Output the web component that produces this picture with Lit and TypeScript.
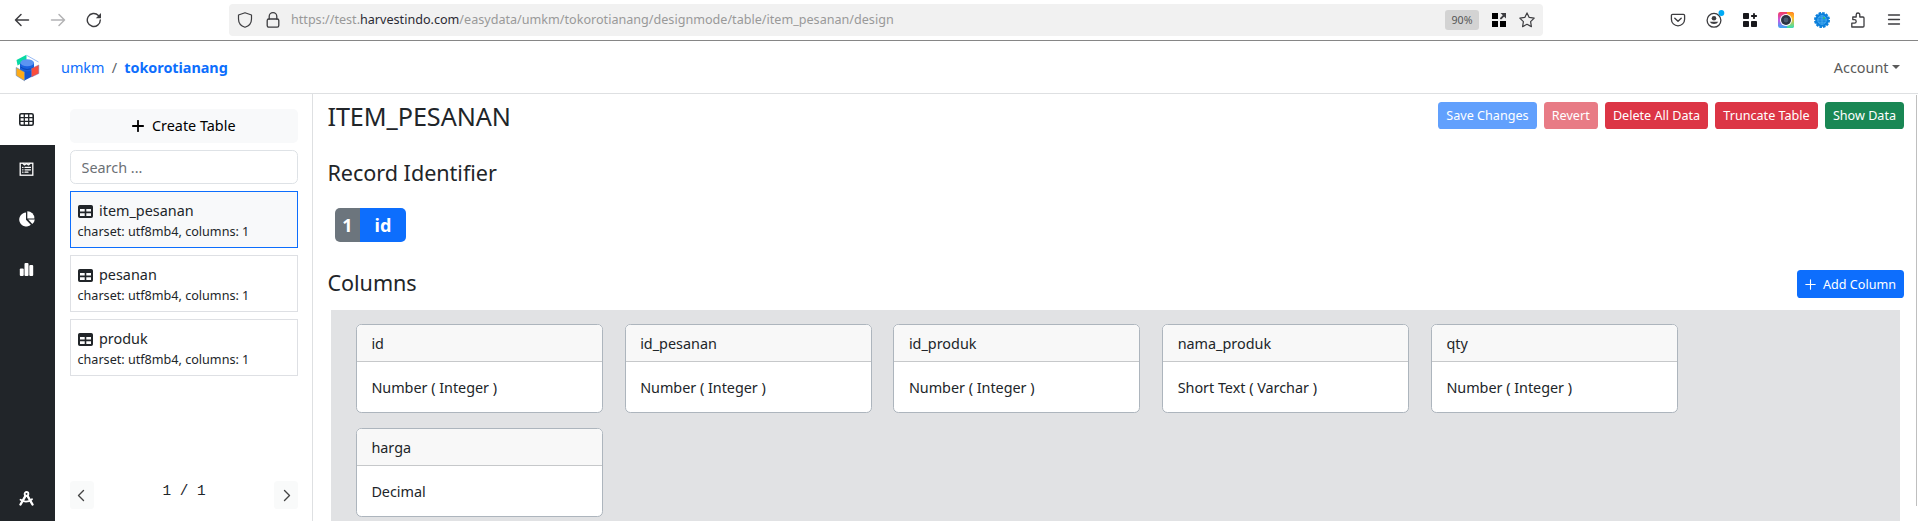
import { LitElement, html, css, svg } from "lit";
import { customElement, state } from "lit/decorators.js";

interface TableInfo { name: string; meta: string; }
interface ColumnInfo { name: string; type: string; }

const icon = (body: unknown, w = 16, h = w, box = "0 0 16 16") =>
  html`<svg class="icon" width=${w} height=${h} viewBox=${box} aria-hidden="true">${body}</svg>`;

const line = (d: string, width = 1.3, color = "currentColor") =>
  svg`<path d=${d} fill="none" stroke=${color} stroke-width=${width} stroke-linecap="round" stroke-linejoin="round"/>`;

const fill = (d: string, color = "currentColor") => svg`<path d=${d} fill=${color} fill-rule="evenodd"/>`;

@customElement("browser-bar")
export class BrowserBar extends LitElement {
  static styles = css`
    :host { display: flex; align-items: center; height: 40px; flex: none; background: #fff; border-bottom: 1px solid #868686; color: #3d3d40; }
    .icon { display: block; flex: none; }
    .nav { display: flex; gap: 20px; width: 229px; padding-left: 14px; box-sizing: border-box; }
    .faded { color: #b3b3b5; }
    .field { display: flex; align-items: center; width: 1314px; height: 32px; background: #f1f1f1; border-radius: 4px; box-sizing: border-box; padding: 0 8px; }
    .lock { margin-left: 12px; }
    .url { margin-left: 10px; flex: 1; font-size: 12.6px; line-height: 20px; color: #999; white-space: nowrap; }
    .host { color: #2b2a33; }
    .zoom { width: 34px; height: 20px; border-radius: 3px; background: #d3d3d3; color: #555; font-size: 10.6px; line-height: 20px; text-align: center; margin-right: 12px; }
    .star { margin-left: 12px; }
    .tools { display: grid; grid-template-columns: repeat(7, 36px); align-items: center; justify-items: center; margin-left: 117px; height: 40px; }
  `;
  render() {
    return html`
      <div class="nav">
        ${icon(line("M14.5 8H1.5M7 2.5L1.5 8L7 13.5", 1.5))}
        <span class="faded">${icon(line("M1.5 8H14.5M9 2.5L14.5 8L9 13.5", 1.5))}</span>
        ${icon(svg`${line("M14.3 8A6.5 6.5 0 1 1 12.4 3.4L13.6 4.6", 1.4)}${fill("M15 1V6.2H9.8Z")}`)}
      </div>
      <div class="field">
        ${icon(line("M8 .8L14.5 3V7C14.5 11 12 14 8 15.3C4 14 1.5 11 1.5 7V3Z", 1.2))}
        <span class="lock">${icon(svg`${line("M4.2 7V4.5a3.8 3.8 0 0 1 7.6 0V7", 1.3)}<rect x="2.2" y="7" width="11.6" height="8.2" rx="1.6" fill="none" stroke="currentColor" stroke-width="1.3"/>`)}</span>
        <span class="url">https://test.<span class="host">harvestindo.com</span>/easydata/umkm/tokorotianang/designmode/table/item_pesanan/design</span>
        <span class="zoom">90%</span>
        ${icon(svg`${fill("M1 1h6v6H1ZM1 9h6v6H1ZM9 9h6v6H9Z", "#000")}${line("M10 6.4L13.5 2.9", 2)}${fill("M9.5 1H15V6.5Z")}`)}
        <span class="star">${icon(line("M8 .9L10.2 5.4L15.2 6.1L11.6 9.6L12.4 14.6L8 12.3L3.6 14.6L4.4 9.6L.8 6.1L5.8 5.4Z", 1.2))}</span>
      </div>
      <div class="tools">
        ${icon(svg`${line("M2.6 2.4h10.8a1.2 1.2 0 0 1 1.2 1.2v3.6a6.6 6.6 0 0 1-13.2 0V3.6a1.2 1.2 0 0 1 1.2-1.2Z", 1.3)}${line("M4.8 6.3L8 9.3L11.2 6.3", 1.4)}`)}
        ${icon(svg`<circle cx="10" cy="10.300" r="6.9" fill="none" stroke="currentColor" stroke-width="1.3"/><circle cx="10" cy="8.2" r="2.3" fill="currentColor"/>${fill("M5.7 11.700h8.600a4.8 4 0 0 1-8.600 0Z")}<circle cx="17.400" cy="3" r="2.9" fill="#00aaf5"/>`, 21, 20, "0 0 21 20")}
        ${icon(svg`<rect x="1" y="1" width="6" height="6" rx=".8" fill="#18181c"/><rect x="1" y="9" width="6" height="6" rx=".8" fill="#18181c"/><rect x="9" y="9" width="6" height="6" rx=".8" fill="#18181c"/>${line("M12 1.8V6.2M9.8 4H14.2", 1.8, "#18181c")}`)}
        ${icon(svg`<defs>
            <linearGradient id="g" x1="0" y1="0" x2="0" y2="1"><stop offset="0" stop-color="#f53a5c"/><stop offset=".5" stop-color="#c65be6"/><stop offset="1" stop-color="#35a9f5"/></linearGradient>
            <linearGradient id="h" x1="0" y1="0" x2="0" y2="1"><stop offset="0" stop-color="#ff8a1c"/><stop offset=".4" stop-color="#ffc02e"/><stop offset="1" stop-color="#35e0b0"/></linearGradient>
          </defs><rect width="16" height="16" rx="2.500" fill="url(#g)"/><path d="M9 0H13.500A2.500 2.500 0 0 1 16 2.500V13.500A2.500 2.500 0 0 1 13.500 16H9Z" fill="url(#h)"/><circle cx="8" cy="8" r="6" fill="#fff"/><circle cx="8" cy="8" r="5" fill="#2c3443"/><circle cx="8" cy="8" r="2.4" fill="#4c5a70"/>`)}
        ${icon(svg`<circle cx="8" cy="8" r="6.8" fill="#0b7fdb"/><circle cx="8" cy="8" r="6.900" fill="none" stroke="#0b7fdb" stroke-width="2.2" stroke-dasharray="2.500 1.110"/><circle cx="8" cy="8" r="4.2" fill="none" stroke="#55b4f5" stroke-width=".8"/>${line("M3.8 8H12.2M8 3.8V12.2M5 5.8H11M5 10.2H11", 0.7, "#55b4f5")}<circle cx="10" cy="6" r=".9" fill="#33cc55"/>`)}
        ${icon(line("M1.800 15H13a1 1 0 0 0 1-1V6a1 1 0 0 0-1-1H9.800V2.800a1.800 1.800 0 0 0-3.600 0V5H2.800V7.600H4.400a1.800 1.800 0 0 1 0 3.600H1.800Z", 1.3))}
        ${icon(line("M2.500 3H13.500M2.500 7.500H13.500M2.500 12H13.500", 1.3))}
      </div>`;
  }
}

@customElement("app-header")
export class AppHeader extends LitElement {
  static styles = css`
    :host { display: flex; flex: none; align-items: center; justify-content: space-between; height: 52px; border-bottom: 1px solid #dee0e2; padding: 0 18px 0 15px; font-size: 14.4px; line-height: 22px; }
    .brand { display: flex; align-items: center; padding-top: 2px; }
    .icon { display: block; margin-right: 21px; }
    .link { color: #0d6efd; }
    .sep { color: #5e6368; margin: 0 7.200px; }
    .current { font-weight: 700; color: #0d6efd; letter-spacing: -.03px; }
    .account { display: flex; align-items: center; color: #5a5a5a; padding-top: 2px; }
    .caret { border: 4.3px solid transparent; border-top-color: currentColor; border-bottom: 0; margin-left: 3.500px; margin-top: -2px; }
  `;
  render() {
    return html`
      <div class="brand">
        ${icon(svg`
          <path d="M5 9.500V21L9.500 26.500L19 21.500V9.500Z" fill="#1456cf"/>
          <path d="M1.500 6L11.500 .8V6L7 9L2.500 11.500Z" fill="#08d9a4"/>
          <path d="M12 1.500L23.500 8" fill="none" stroke="#7fa9f3" stroke-width=".8"/>
          <path d="M5.500 8.500V15Q12 20 19 15V8.500Z" fill="#1a62e0"/>
          <path d="M5.500 13Q12 18 19 13" fill="none" stroke="#0c45b4"/>
          <ellipse cx="12.200" cy="8.700" rx="6.800" ry="3.500" fill="#5b94f2"/>
          <path d="M1.200 13.500L9.500 18V26.800L1.200 21.500Z" fill="#fcab1a" stroke="#5b86c9" stroke-width=".6"/>
          <path d="M16.500 14.500L23.800 11V19.500L16.500 23Z" fill="#fb4d3d" stroke="#7d76b8" stroke-width=".5"/>`, 25, 28, "0 0 25 28")}
        <span class="link">umkm</span><span class="sep">/</span><span class="current">tokorotianang</span>
      </div>
      <div class="account">Account<span class="caret"></span></div>`;
  }
}

@customElement("side-rail")
export class SideRail extends LitElement {
  static styles = css`
    :host { display: flex; flex-direction: column; width: 55px; flex: none; background: #212529; color: #fff; }
    .item { height: 50px; box-sizing: border-box; display: flex; align-items: center; justify-content: center; padding: 0 2px 2px 0; }
    .active { background: #fff; color: #212529; height: 51px; padding-bottom: 0; }
    .last { margin-top: auto; height: 45px; padding-bottom: 1px; }
    .icon { display: block; }
  `;
  render() {
    return html`
      <div class="item active">${icon(svg`<rect x=".8" y="1.800" width="13.400" height="11.400" rx="1.500" fill="none" stroke="currentColor" stroke-width="1.600"/>${line("M1 5.600H14M1 9.400H14M5.300 2V13M9.700 2V13", 1.300)}`, 15, 15, "0 0 15 15")}</div>
      <div class="item">${icon(svg`<rect x="1.200" y="1.200" width="12.600" height="12" fill="none" stroke="currentColor" stroke-width="1.300"/>${line("M4 1.500L5.500 3L7.500 1.500L9.500 3L11 1.500M3.600 5.400H4M6 5.400H11.500M3.600 7.800H4M6 7.800H11.500M3.600 10.200H4M6 10.200H9", 1.200)}`, 15, 15, "0 0 15 15")}</div>
      <div class="item">${icon(svg`${fill("M7 1.500V8.800L11.800 13.800A7 7 0 1 1 7 1.500Z")}${fill("M8.300 .3A7 7 0 0 1 15.400 7.400H8.300Z")}${fill("M9.200 8.600H15.800A6.500 6.500 0 0 1 13.300 13.100Z")}`)}</div>
      <div class="item">${icon(svg`<rect x=".8" y="6.500" width="3.900" height="7.500" rx="1" fill="currentColor"/><rect x="5.500" y="1" width="4" height="13" rx="1" fill="currentColor"/><rect x="10.300" y="3" width="3.900" height="11" rx="1" fill="currentColor"/>`, 15, 15, "0 0 15 15")}</div>
      <div class="item last">${icon(svg`<circle cx="7.500" cy="2.900" r="1.900" fill="none" stroke="currentColor" stroke-width="1.800"/>${line("M6.500 4.800L1.500 13.500M8.500 4.800L13.500 13.500", 2.400)}${line("M1.500 8.800Q7.500 12.800 13 8.200", 1.800)}`, 15, 15, "0 0 15 15")}</div>`;
  }
}

@customElement("table-list")
export class TableList extends LitElement {
  @state() private tables: TableInfo[] = [
    { name: "item_pesanan", meta: "charset: utf8mb4, columns: 1" },
    { name: "pesanan", meta: "charset: utf8mb4, columns: 1" },
    { name: "produk", meta: "charset: utf8mb4, columns: 1" },
  ];
  static styles = css`
    :host { display: flex; flex-direction: column; width: 258px; flex: none; box-sizing: border-box; padding: 15px 14px 12px 15px; gap: 7px; border-right: 1px solid #dee0e2; font-size: 14.4px; color: #212529; }
    .icon { display: block; }
    .create { height: 34px; display: flex; align-items: center; justify-content: center; gap: 7.500px; background: #f8f9fa; color: #000; border-radius: 5px; line-height: 20px; padding-bottom: 0; }
    .search { height: 34px; box-sizing: border-box; border: 1px solid #dee2e6; border-radius: 5.400px; padding: 0 10.500px; font: inherit; color: #212529; background: #fff; }
    .search::placeholder { color: #6c7075; opacity: 1; }
    .card { height: 57px; box-sizing: border-box; border: 1px solid #dee0e4; padding: 8px 6.500px; }
    .selected { border-color: #0d6efd; background: #f8f9fa; }
    .name { display: flex; align-items: center; gap: 6.500px; line-height: 22px; }
    .meta { font-size: 12.600px; line-height: 19px; }
    .pager { display: flex; justify-content: space-between; margin-top: auto; height: 28px; }
    .page { width: 24px; display: flex; align-items: center; justify-content: center; background: #f9fafa; border-radius: 3.600px; color: #444; }
    .page:first-child .icon { margin-right: 2px; }
    .count { font: 14.400px/20px "Liberation Mono", monospace; white-space: pre; }
  `;
  render() {
    return html`
      <div class="create">${icon(line("M6 .8V11.200M.8 6H11.200", 1.800), 12, 12, "0 0 12 12")}<span>Create Table</span></div>
      <input class="search" placeholder="Search ..." />
      ${this.tables.map((t, i) => html`
        <div class="card ${i === 0 ? "selected" : ""}">
          <div class="name">${icon(fill("M1.800 1H13.200A1.800 1.800 0 0 1 15 2.800V12.200A1.800 1.800 0 0 1 13.200 14H1.800A1.800 1.800 0 0 1 0 12.200V2.800A1.800 1.800 0 0 1 1.800 1ZM2 5V7.600H6.700V5ZM8.300 5V7.600H13V5ZM2 9.300V12H6.700V9.300ZM8.300 9.300V12H13V9.300Z"), 15, 15, "0 0 15 15")}<span>${t.name}</span></div>
          <div class="meta">${t.meta}</div>
        </div>`)}
      <div class="pager">
        <span class="page">${icon(line("M8.500 1.500L3.500 6.500L8.500 11.500", 1.400), 13, 13, "0 0 13 13")}</span>
        <span class="count">1 / 1</span>
        <span class="page">${icon(line("M4.500 1.500L9.500 6.500L4.500 11.500", 1.400), 13, 13, "0 0 13 13")}</span>
      </div>`;
  }
}

@customElement("table-designer")
export class TableDesigner extends LitElement {
  @state() private columns: ColumnInfo[] = [
    { name: "id", type: "Number ( Integer )" },
    { name: "id_pesanan", type: "Number ( Integer )" },
    { name: "id_produk", type: "Number ( Integer )" },
    { name: "nama_produk", type: "Short Text ( Varchar )" },
    { name: "qty", type: "Number ( Integer )" },
    { name: "harga", type: "Decimal" },
  ];
  static styles = css`
    :host { display: flex; flex-direction: column; flex: 1; min-width: 0; padding: 8px 12px 0 14.400px; color: #212529; font-size: 14.400px; }
    .bar { display: flex; flex: none; justify-content: space-between; align-items: flex-start; height: 30px; }
    .title { font-size: 25.200px; line-height: 28px; font-weight: 400; margin: 0; letter-spacing: -.05px; }
    .heading { font-size: 21.600px; line-height: 26px; font-weight: 400; margin: 0; flex: none; letter-spacing: -.03px; }
    .record { margin-top: 28px; }
    .actions { display: flex; gap: 7.200px; }
    .btn { height: 27px; border: 0; border-radius: 3.600px; padding: 1px 8px 0; font: inherit; font-size: 12.600px; line-height: 26px; color: #fff; display: flex; align-items: center; white-space: nowrap; }
    .primary { background: #0d6efd; }
    .danger { background: #dc3545; }
    .success { background: #198754; }
    .off { opacity: .65; }
    .ident { display: flex; flex: none; width: max-content; height: 34px; margin: 22px 0 0 7.600px; border-radius: 5px; overflow: hidden; color: #fff; font-size: 18px; font-weight: 700; line-height: 34px; text-align: center; }
    .order { width: 25px; background: #6c757d; }
    .key { width: 46px; background: #0d6efd; }
    .cols { margin-top: 28px; }
    .add { height: 28px; gap: 7.500px; }
    .icon { display: block; }
    .grid { flex: 1; min-height: 0; display: grid; grid-template-columns: repeat(5, 247px); grid-auto-rows: 89px; gap: 15px 21.750px; align-content: start; background: #e1e2e4; margin: 10px 4px 0 3.600px; padding: 14px 25px; }
    .col { box-sizing: border-box; background: #fff; border: 1px solid #adb5bd; border-radius: 5.400px; overflow: hidden; }
    .colname { height: 36px; box-sizing: content-box; line-height: 37px; padding: 0 14.400px; background: #f8f8f8; border-bottom: 1px solid #c6c8ca; }
    .coltype { padding: 15px 14.400px; line-height: 22px; letter-spacing: -.02px; }
  `;
  render() {
    return html`
      <div class="bar">
        <h3 class="title">ITEM_PESANAN</h3>
        <div class="actions">
          <button class="btn primary off">Save Changes</button>
          <button class="btn danger off">Revert</button>
          <button class="btn danger">Delete All Data</button>
          <button class="btn danger">Truncate Table</button>
          <button class="btn success">Show Data</button>
        </div>
      </div>
      <h4 class="heading record">Record Identifier</h4>
      <div class="ident"><span class="order">1</span><span class="key">id</span></div>
      <div class="bar cols">
        <h4 class="heading">Columns</h4>
        <button class="btn primary add">${icon(line("M5.500 .8V10.200M.8 5.500H10.200", 1.100), 11, 11, "0 0 11 11")}<span>Add Column</span></button>
      </div>
      <div class="grid">
        ${this.columns.map((c) => html`<div class="col"><div class="colname">${c.name}</div><div class="coltype">${c.type}</div></div>`)}
      </div>`;
  }
}

@customElement("app-root")
export class AppRoot extends LitElement {
  static styles = css`
    :host { display: flex; flex-direction: column; height: 521px; overflow: hidden; background: #fff; font-family: "Noto Sans", "Open Sans", sans-serif; }
    .body { display: flex; flex: 1; min-height: 0; }
    .track { width: 1px; height: 411px; margin: 1px 1px 0 0; background: #bfbfbf; }
  `;
  render() {
    return html`
      <browser-bar></browser-bar>
      <app-header></app-header>
      <div class="body">
        <side-rail></side-rail>
        <table-list></table-list>
        <table-designer></table-designer>
        <div class="track"></div>
      </div>`;
  }
}
